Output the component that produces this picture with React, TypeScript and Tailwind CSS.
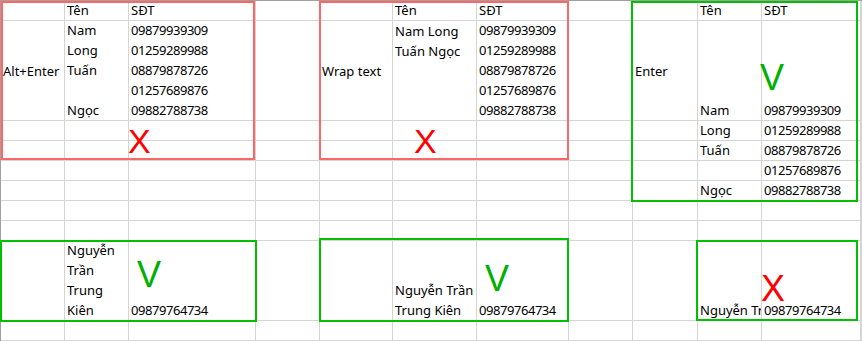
import React from "react";

type Align = "top" | "center" | "bottom";
type CellDef = { lines: string[]; align?: Align; num?: boolean; clip?: boolean };

const COLS = "64px 64px 127px 64px 73px 84px 92px 64px 65px 64px 99px 1fr";
const ROWS = [20, 100, 20, 20, 20, 20, 20, 20, 80, 20, 20];

const nums5 = ["09879939309", "01259289988", "08879878726", "01257689876", "09882788738"];

const cells: Record<string, CellDef> = {
  "0-1": { lines: ["Tên"] },
  "0-2": { lines: ["SĐT"] },
  "0-5": { lines: ["Tên"] },
  "0-6": { lines: ["SĐT"] },
  "0-9": { lines: ["Tên"] },
  "0-10": { lines: ["SĐT"] },
  "1-0": { lines: ["Alt+Enter"], align: "center" },
  "1-1": { lines: ["Nam", "Long", "Tuấn", "", "Ngọc"] },
  "1-2": { lines: nums5, num: true },
  "1-4": { lines: ["Wrap text"], align: "center" },
  "1-5": { lines: ["Nam Long", "Tuấn Ngọc"], align: "top" },
  "1-6": { lines: nums5, num: true },
  "1-8": { lines: ["Enter"], align: "center" },
  "1-9": { lines: ["Nam"] },
  "1-10": { lines: ["09879939309"], num: true },
  "2-9": { lines: ["Long"] },
  "2-10": { lines: ["01259289988"], num: true },
  "3-9": { lines: ["Tuấn"] },
  "3-10": { lines: ["08879878726"], num: true },
  "4-10": { lines: ["01257689876"], num: true },
  "5-9": { lines: ["Ngọc"] },
  "5-10": { lines: ["09882788738"], num: true },
  "8-1": { lines: ["Nguyễn", "Trần", "Trung", "Kiên"] },
  "8-2": { lines: ["09879764734"], num: true },
  "8-5": { lines: ["Nguyễn Trần", "Trung Kiên"] },
  "8-6": { lines: ["09879764734"], num: true },
  "8-9": { lines: ["Nguyễn Trần Trung Kiên"], clip: true },
  "8-10": { lines: ["09879764734"], num: true },
};

function Cell({ def }: { def?: CellDef }) {
  if (!def) return <div className="border-r border-b border-[#d4d4d4] box-border" />;
  const align = def.align ?? "bottom";
  const justify =
    align === "top" ? "justify-start" : align === "center" ? "justify-center" : "justify-end";
  return (
    <div
      className={`border-r border-b border-[#d4d4d4] box-border flex flex-col ${justify} pl-[2px] ${
        def.clip ? "overflow-hidden" : "overflow-visible"
      }`}
    >
      {def.lines.map((l, i) => (
        <div
          key={i}
          className={`h-[20px] leading-[20px] whitespace-nowrap text-[13px] text-black ${
            def.num ? "tracking-[-0.45px]" : ""
          }`}
        >
          {l || "\u00a0"}
        </div>
      ))}
    </div>
  );
}

export default function App() {
  const all: React.ReactNode[] = [];
  ROWS.forEach((_, r) => {
    for (let c = 0; c < 12; c++) {
      all.push(<Cell key={`${r}-${c}`} def={cells[`${r}-${c}`]} />);
    }
  });
  return (
    <div
      className="relative w-[862px] h-[341px] overflow-hidden bg-white"
      style={{ fontFamily: '"Noto Sans", "Open Sans", sans-serif' }}
    >
      <div
        className="grid border-l border-t border-[#a0a0a0]"
        style={{ gridTemplateColumns: COLS, gridTemplateRows: ROWS.map((h) => `${h}px`).join(" ") }}
      >
        {all}
      </div>

      {/* selection-style borders */}
      <div className="absolute left-[1px] top-[1px] w-[254px] h-[159px] border-2 border-[#ff6666]" />
      <div className="absolute left-[319px] top-[1px] w-[250px] h-[159px] border-2 border-[#ff6666]" />
      <div className="absolute left-[631px] top-[1px] w-[227px] h-[201px] border-2 border-[#00c000]" />
      <div className="absolute left-[0px] top-[240px] w-[257px] h-[82px] border-2 border-[#00c000]" />
      <div className="absolute left-[319px] top-[238px] w-[250px] h-[84px] border-2 border-[#00c000]" />
      <div className="absolute left-[696px] top-[240px] w-[162px] h-[81px] border-2 border-[#00c000]" />

      {/* marks */}
      <div
        className="absolute left-[128px] top-[123.5px] text-[34px] leading-none text-[#ff0000]"
        style={{ fontFamily: '"Liberation Sans", Arial, sans-serif' }}
      >
        X
      </div>
      <div
        className="absolute left-[414px] top-[123.5px] text-[34px] leading-none text-[#ff0000]"
        style={{ fontFamily: '"Liberation Sans", Arial, sans-serif' }}
      >
        X
      </div>
      <div
        className="absolute left-[760px] top-[60px] text-[36px] leading-none text-[#00b000]"
        style={{ fontFamily: '"Liberation Sans", Arial, sans-serif' }}
      >
        V
      </div>
      <div
        className="absolute left-[137px] top-[257px] text-[36px] leading-none text-[#00b000]"
        style={{ fontFamily: '"Liberation Sans", Arial, sans-serif' }}
      >
        V
      </div>
      <div
        className="absolute left-[485px] top-[261px] text-[36px] leading-none text-[#00b000]"
        style={{ fontFamily: '"Liberation Sans", Arial, sans-serif' }}
      >
        V
      </div>
      <div
        className="absolute left-[761px] top-[271px] text-[36px] leading-none text-[#ff0000]"
        style={{ fontFamily: '"Liberation Sans", Arial, sans-serif' }}
      >
        X
      </div>
    </div>
  );
}
